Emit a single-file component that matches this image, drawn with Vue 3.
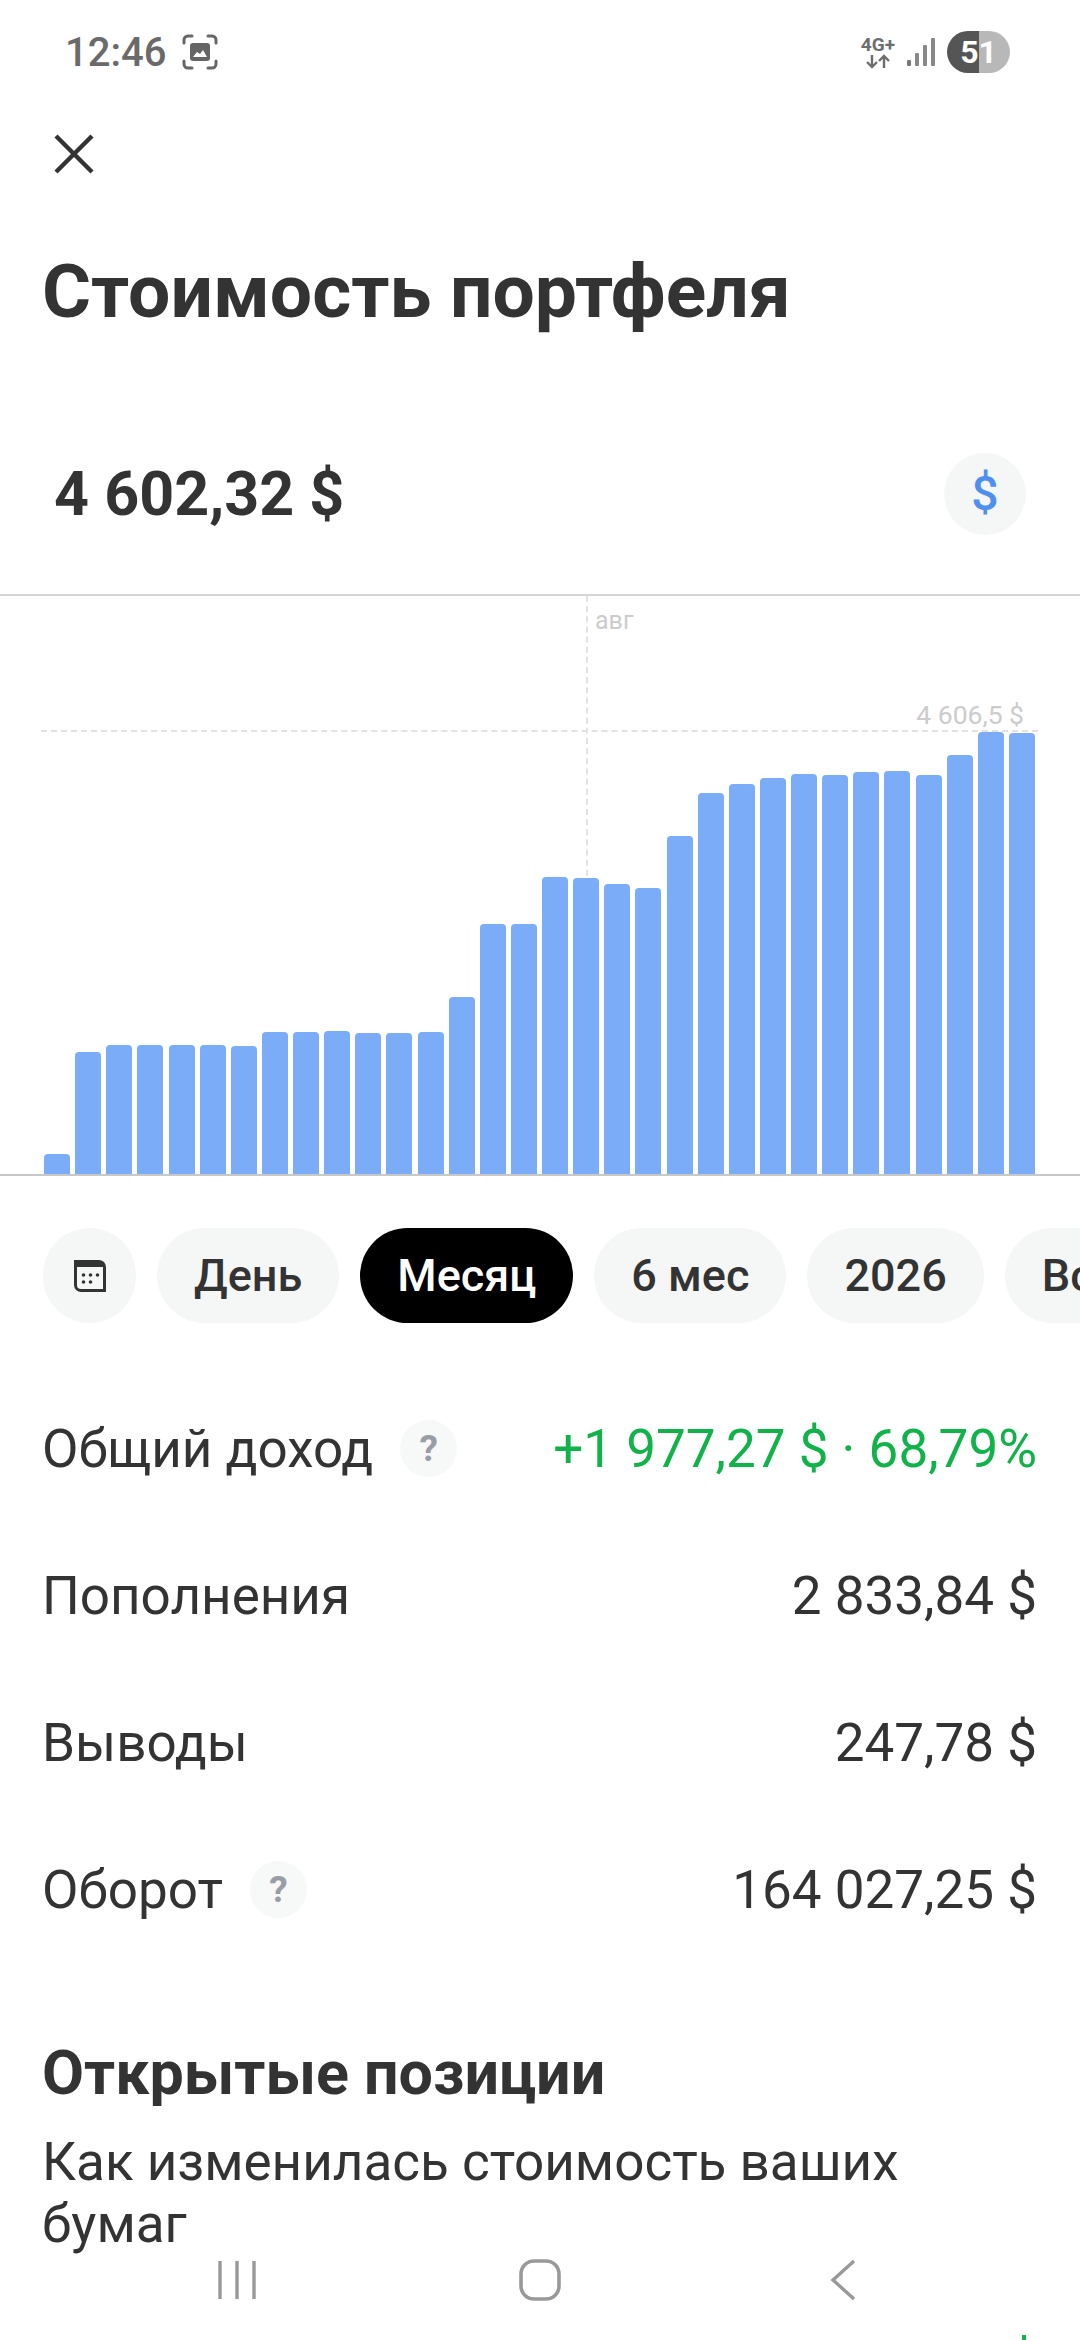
<template>
  <div class="screen">
    <div class="status-bar">
      <div class="status-left">
        <span class="clock">12:46</span>
        <svg class="shot-icon" width="36" height="36" viewBox="0 0 36 36">
          <path d="M2 9V6a4 4 0 0 1 4-4h4M26 2h4a4 4 0 0 1 4 4v3M34 27v3a4 4 0 0 1-4 4h-4M10 34H6a4 4 0 0 1-4-4v-3" fill="none" stroke="#666" stroke-width="3" stroke-linecap="round" />
          <rect x="8" y="9" width="20" height="18" rx="3" fill="#666" />
          <path d="M11 23l4-5 3 2 3-4 4 7z" fill="#fff" />
        </svg>
      </div>
      <div class="status-right">
        <div class="net">
          <span class="net-label">4G+</span>
          <svg width="28" height="15" viewBox="0 0 28 15">
            <path d="M8 1v12M3 8l5 5 5-5M20 14V2M15 7l5-5 5 5" fill="none" stroke="#6e6e6e" stroke-width="2.4" />
          </svg>
        </div>
        <svg width="28" height="30" viewBox="0 0 28 30">
          <rect x="0" y="23" width="4" height="6" rx="1" fill="#777" />
          <rect x="8" y="16" width="4" height="13" rx="1" fill="#888" />
          <rect x="16" y="8" width="4" height="21" rx="1" fill="#888" />
          <rect x="24" y="1" width="4" height="28" rx="1" fill="#888" />
        </svg>
        <div class="battery"><span>51</span></div>
      </div>
    </div>

    <div class="close-row">
      <svg width="42" height="42" viewBox="0 0 42 42">
        <path d="M3 3l36 36M39 3L3 39" stroke="#333" stroke-width="4.4" fill="none" />
      </svg>
    </div>

    <h1 class="title">Стоимость портфеля</h1>

    <div class="balance-row">
      <span class="balance">4 602,32 $</span>
      <div class="currency">$</div>
    </div>

    <div class="chart">
      <div class="grid-v"></div>
      <span class="month">авг</span>
      <div class="grid-h"></div>
      <span class="max-label">4 606,5 $</span>
      <div class="bars">
        <div v-for="(top, i) in barTops" :key="i" class="bar" :style="{ height: 1174 - top + 'px' }"></div>
      </div>
    </div>

    <div class="periods">
      <div class="pill pill-icon">
        <svg width="34" height="34" viewBox="0 0 34 34">
          <path d="M1 1h25a7 7 0 0 1 7 7v25H8a7 7 0 0 1-7-7z" fill="#333" />
          <path d="M4 8h26v22H8a4 4 0 0 1-4-4z" fill="#f5f7f7" />
          <g fill="#333">
            <circle cx="10.5" cy="16" r="1.8" /><circle cx="17.5" cy="16" r="1.8" /><circle cx="24.5" cy="16" r="1.8" />
            <circle cx="10.5" cy="23" r="1.8" /><circle cx="17.5" cy="23" r="1.8" />
          </g>
        </svg>
      </div>
      <div v-for="p in periods" :key="p" class="pill" :class="{ active: p === 'Месяц' }">{{ p }}</div>
    </div>

    <div class="stats">
      <div v-for="row in rows" :key="row.label" class="stat-row">
        <div class="stat-label">
          <span>{{ row.label }}</span>
          <span v-if="row.hint" class="hint">?</span>
        </div>
        <span class="stat-value" :class="{ plus: row.plus }">{{ row.value }}</span>
      </div>
    </div>

    <h2 class="subtitle">Открытые позиции</h2>
    <p class="caption">Как изменилась стоимость ваших бумаг</p>

    <div class="nav-bar">
      <svg width="38" height="40" viewBox="0 0 38 40">
        <path d="M2 1v38M19 1v38M36 1v38" stroke="#999" stroke-width="3.4" fill="none" />
      </svg>
      <svg class="nav-home" width="42" height="42" viewBox="0 0 42 42">
        <rect x="2" y="2" width="38" height="38" rx="13" stroke="#999" stroke-width="3.6" fill="none" />
      </svg>
      <svg width="26" height="42" viewBox="0 0 26 42">
        <path d="M24 2L3 21l21 19" stroke="#999" stroke-width="3.4" fill="none" />
      </svg>
    </div>

    <!-- the top of the next list row just shows at the bottom edge -->
    <div class="next-row"></div>
  </div>
</template>

<script setup>
const barTops = [
  1154, 1052, 1045, 1045, 1045, 1045, 1046, 1032, 1032, 1031, 1033, 1033, 1032, 997, 924, 924,
  877, 878, 884, 888, 836, 793, 784, 778, 774, 775, 772, 771, 775, 755, 732, 733
]

const periods = ['День', 'Месяц', '6 мес', '2026', 'Все']

const rows = [
  { label: 'Общий доход', value: '+1 977,27 $ · 68,79%', hint: true, plus: true },
  { label: 'Пополнения', value: '2 833,84 $' },
  { label: 'Выводы', value: '247,78 $' },
  { label: 'Оборот', value: '164 027,25 $', hint: true }
]
</script>

<style>
html, body {
  margin: 0;
  background: #fff;
}
</style>

<style scoped>
.screen {
  position: relative;
  width: 1080px;
  height: 2340px;
  overflow: hidden;
  background: #fff;
  color: #333;
  font-family: Roboto, "Noto Sans", sans-serif;
}

.status-bar {
  height: 104px;
  padding: 0 70px 0 65px;
  box-sizing: border-box;
  display: flex;
  align-items: center;
  justify-content: space-between;
}
.status-left {
  display: flex;
  align-items: center;
  gap: 16px;
}
.clock {
  font-size: 40px;
  font-weight: 500;
  color: #6a6a6a;
}
.status-right {
  display: flex;
  align-items: center;
  gap: 12px;
}
.net {
  display: flex;
  flex-direction: column;
  align-items: center;
  line-height: 1;
}
.net-label {
  font-size: 19px;
  font-weight: 700;
  color: #6e6e6e;
}
.battery {
  width: 63px;
  height: 42px;
  border-radius: 21px;
  background: linear-gradient(90deg, #555 0 51%, #b8b8b8 51% 100%);
  color: #fff;
  font-size: 32px;
  font-weight: 700;
  line-height: 42px;
  text-align: center;
}

.close-row {
  height: 50px;
  padding-left: 53px;
  margin-top: 25px;
  display: flex;
  align-items: center;
}

.title {
  margin: 67px 0 0 42px;
  font-size: 75px;
  line-height: 90px;
  font-weight: 700;
}

.balance-row {
  margin-top: 117px;
  height: 82px;
  padding: 0 54px;
  display: flex;
  align-items: center;
  justify-content: space-between;
}
.balance {
  font-size: 61px;
  font-weight: 700;
}
.currency {
  width: 82px;
  height: 82px;
  border-radius: 50%;
  background: #f5f7f7;
  color: #4f8ff0;
  font-size: 48px;
  font-weight: 500;
  line-height: 82px;
  text-align: center;
}

.chart {
  position: relative;
  margin-top: 59px;
  height: 578px;
  box-sizing: content-box;
  border-top: 2px solid #d4d4d4;
  border-bottom: 2px solid #c8c8c8;
  display: flex;
  align-items: flex-end;
}
.grid-v {
  position: absolute;
  left: 586px;
  top: 0;
  height: 290px;
  border-left: 2px dashed #e2e2e2;
}
.grid-h {
  position: absolute;
  left: 41px;
  right: 42px;
  top: 134px;
  border-top: 2px dashed #e2e2e2;
}
.month {
  position: absolute;
  left: 595px;
  top: 10px;
  font-size: 25px;
  color: #ccc;
}
.max-label {
  position: absolute;
  right: 56px;
  top: 103px;
  font-size: 26.5px;
  color: #ccc;
}
.bars {
  position: relative;
  width: 100%;
  padding-left: 44px;
  display: flex;
  align-items: flex-end;
  gap: 5.13px;
}
.bar {
  width: 26px;
  flex: none;
  background: #7aacf8;
  border-radius: 4px 4px 0 0;
}

.periods {
  margin-top: 52px;
  padding-left: 43px;
  display: flex;
  gap: 21px;
  white-space: nowrap;
}
.pill {
  flex: none;
  height: 95px;
  padding: 0 37px;
  border-radius: 48px;
  background: #f5f7f7;
  font-size: 45px;
  font-weight: 500;
  line-height: 95px;
}
.pill-icon {
  width: 93px;
  padding: 0;
  display: flex;
  align-items: center;
  justify-content: center;
}
.pill.active {
  background: #000;
  color: #fff;
}

.stats {
  margin-top: 52px;
  padding: 0 43px 0 42px;
}
.stat-row {
  height: 147px;
  display: flex;
  align-items: center;
  justify-content: space-between;
  font-size: 53px;
}
.stat-label {
  display: flex;
  align-items: center;
  gap: 27px;
}
.hint {
  width: 57px;
  height: 57px;
  border-radius: 50%;
  background: #f7f8f8;
  color: #9a9ca6;
  font-size: 37px;
  font-weight: 700;
  line-height: 57px;
  text-align: center;
}
.plus {
  color: #12b24a;
}

.subtitle {
  margin: 74px 0 0 42px;
  font-size: 61px;
  line-height: 72px;
  font-weight: 700;
}
.caption {
  margin: 22px 44px 0 42px;
  font-size: 53px;
  line-height: 62px;
}

.nav-bar {
  position: absolute;
  left: 218px;
  top: 2259px;
  width: 638px;
  display: flex;
  justify-content: space-between;
  align-items: center;
}
.nav-home {
  margin-left: -6px;
}
.next-row {
  position: absolute;
  left: 1022px;
  bottom: 0;
  width: 4px;
  height: 5px;
  background: #12b24a;
}
</style>
